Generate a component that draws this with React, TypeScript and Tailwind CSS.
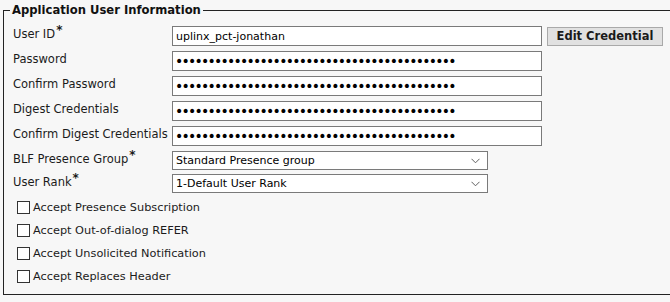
import type { ReactNode } from "react";

const DOTS = "x".repeat(43);

function Req() {
  return <span className="relative -top-[4px] ml-[1px] text-[12px] font-bold">*</span>;
}

function Row({ label, children, h = "h-[20px]" }: { label: ReactNode; children: ReactNode; h?: string }) {
  return (
    <div className={`flex items-start ${h}`}>
      <label className="w-[159px] shrink-0 pt-[1px] text-[11.5px] leading-[14px] whitespace-nowrap text-[#1b1b1b]">
        {label}
      </label>
      {children}
    </div>
  );
}

function TextBox({ value }: { value: string }) {
  return (
    <input
      type="text"
      defaultValue={value}
      className="h-[20px] w-[370px] border border-[#7a7a7a] bg-white px-[3px] text-[11px] text-black outline-none"
    />
  );
}

function PassBox({ value }: { value: string }) {
  return (
    <input
      type="password"
      defaultValue={value}
      className="h-[20px] w-[370px] border border-[#7a7a7a] bg-white px-[2px] text-[14px] tracking-[-1.75px] text-black outline-none"
    />
  );
}

function Select({ value }: { value: string }) {
  return (
    <div className="relative h-[19px] w-[316px] border border-[#7a7a7a] bg-white">
      <span className="absolute left-[3px] top-[2px] text-[11px] leading-[14px] text-black">{value}</span>
      <svg className="absolute right-[7px] top-[6px]" width="9" height="6" viewBox="0 0 9 6">
        <path d="M0.5 0.8 L4.5 4.8 L8.5 0.8" fill="none" stroke="#606060" strokeWidth="1" />
      </svg>
    </div>
  );
}

function Check({ label }: { label: string }) {
  return (
    <div className="flex h-[23px] items-start">
      <span className="h-[13px] w-[13px] shrink-0 border border-[#333] bg-white" />
      <span className="ml-[3px] text-[11.3px] leading-[14px] text-[#1b1b1b]">{label}</span>
    </div>
  );
}

export default function App() {
  return (
    <div
      className="h-[302px] w-[670px] overflow-hidden bg-[#f7f7f7]"
      style={{ fontFamily: '"DejaVu Sans", Verdana, sans-serif' }}
    >
      <fieldset className="ml-[3px] mt-[3px] h-[292px] w-[700px] border border-[#222]">
        <legend className="ml-[6px] px-[2px] text-[11.6px] font-bold leading-[14px] text-[#111]">
          Application User Information
        </legend>
        <div className="flex flex-col gap-[5px] pl-[9px] pt-[9px]">
          <Row label={<>User ID<Req /></>}>
            <TextBox value="uplinx_pct-jonathan" />
            <button className="ml-[5px] mt-[1px] h-[19px] w-[116px] border border-[#a9a9a9] bg-[#e1e1e1] text-[11.5px] font-bold text-[#1a1a1a]">
              Edit Credential
            </button>
          </Row>
          <Row label="Password">
            <PassBox value={DOTS} />
          </Row>
          <Row label="Confirm Password">
            <PassBox value={DOTS} />
          </Row>
          <Row label="Digest Credentials">
            <PassBox value={DOTS} />
          </Row>
          <Row label="Confirm Digest Credentials">
            <PassBox value={DOTS} />
          </Row>
          <Row label={<>BLF Presence Group<Req /></>} h="h-[19px]">
            <Select value="Standard Presence group" />
          </Row>
          <div className="-mt-[1px]">
            <Row label={<>User Rank<Req /></>} h="h-[19px]">
              <Select value="1-Default User Rank" />
            </Row>
          </div>
          <div className="ml-[4px] mt-[3px] flex flex-col">
            <Check label="Accept Presence Subscription" />
            <Check label="Accept Out-of-dialog REFER" />
            <Check label="Accept Unsolicited Notification" />
            <Check label="Accept Replaces Header" />
          </div>
        </div>
      </fieldset>
    </div>
  );
}
